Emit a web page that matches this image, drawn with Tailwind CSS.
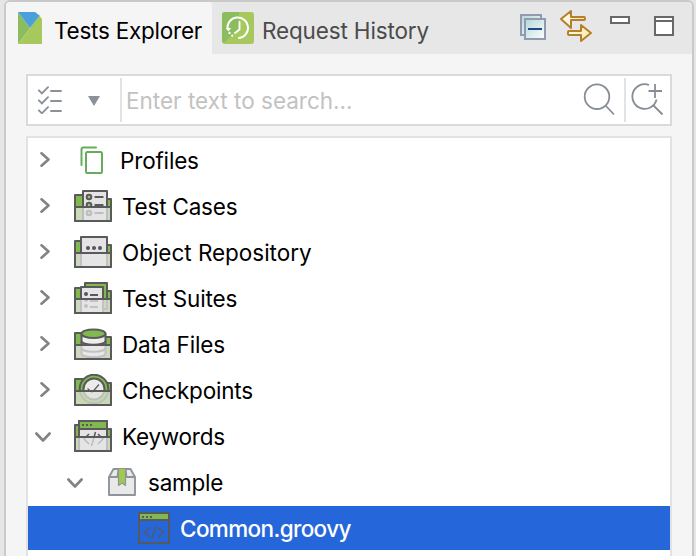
<!DOCTYPE html>
<html lang="en">
<head>
<meta charset="utf-8">
<title>Tests Explorer</title>
<script src="https://cdn.jsdelivr.net/npm/@tailwindcss/browser@4"></script>
</head>
<body class="h-[556px] w-[696px] overflow-hidden bg-[#e6e6e6] pl-1 font-['Inter','Liberation_Sans',sans-serif] text-[22.5px] leading-[28px] text-black">
<div class="flex h-[570px] w-[690px] flex-col overflow-hidden rounded-t-[6px] border-2 border-[#c9c9c9] bg-[#f5f5f5]">
  <header class="flex h-[52px] shrink-0 bg-[#e7e7e7]">
    <div class="flex w-[206px] items-start rounded-tr-[3px] bg-[#f5f5f5] pl-3 pt-[10px]">
      <svg class="h-8 w-6 shrink-0" viewBox="0 0 24 32"><path fill="#8bbd5e" d="M0 0l12 16L0 32z"/><path fill="#a6c85d" d="M0 32l12-16L21 3l3 4v25z"/><path fill="#4aa0d8" d="M0 0h17l4.500 3.500L12 16z"/></svg>
      <span class="ml-[12px] mt-[5px] whitespace-nowrap tracking-[-0.23px]">Tests Explorer</span>
    </div>
    <div class="flex grow items-start pl-[10px] pt-[10px] text-[#4b4b4b]">
      <svg class="size-8 shrink-0" viewBox="0 0 32 32" fill="none"><rect width="32" height="32" rx="3" fill="#a6c85d"/><path fill="#8bbd5e" d="M3 0h14v16L2 31Q0 30 0 28V3Q0 0 3 0z"/><path stroke="#fff" stroke-width="1.900" stroke-linecap="round" stroke-linejoin="round" d="M5.500 17A10.300 10.300 0 1 1 17 26M17.500 10v7.500L13 21"/><g fill="#fff"><path d="M4 16h5l-2.500 3.500z"/><circle cx="7.500" cy="21" r="1.200"/><circle cx="10.200" cy="23.700" r="1.100"/></g></svg>
      <span class="ml-[8px] mt-[5px] whitespace-nowrap tracking-[-0.15px]">Request History</span>
    </div>
    <div class="flex items-start pr-[18px] pt-2">
      <svg class="mt-1 size-[26px]" viewBox="0 0 26 26"><defs><linearGradient id="pane" x2="1" y2="1"><stop stop-color="#b2d7d7"/><stop offset="1" stop-color="#fff"/></linearGradient></defs><g fill="url(#pane)" stroke="#909ab0" stroke-width="2"><path d="M1 1h20v20H1z"/><path d="M5 5h20v20H5z"/></g><path fill="#1d4a86" d="M8 14h14v2H8z"/></svg>
      <svg class="ml-[14px] h-8 w-8" viewBox="0 0 32 32"><defs><linearGradient id="gold" x2="1" y2="0"><stop stop-color="#fffdf0"/><stop offset="1" stop-color="#ffe9a6"/></linearGradient></defs><g fill="url(#gold)" stroke="#b4802d" stroke-width="2" stroke-linejoin="round"><path d="M1 9l10-8v6h13q1 0 1 1v1q0 1-1 1H11v8z"/><path d="M31 23l-10 8v-6H9q-1 0-1-1v-2q0-1 1-1h12v-6z"/></g></svg>
      <svg class="ml-[18px] mt-[6px] h-2 w-5" viewBox="0 0 20 8"><path fill="#fff" stroke="#686868" stroke-width="2" d="M1 1h18v6H1z"/></svg>
      <svg class="ml-[24px] mt-[6px] size-5" viewBox="0 0 20 20"><path fill="#fff" stroke="#686868" stroke-width="2" d="M1 1h18v18H1zM1 5h18"/></svg>
    </div>
  </header>

  <main class="flex min-h-0 grow flex-col gap-[10px] pl-5 pr-5 pt-5">
    <div class="flex h-[52px] shrink-0 items-stretch border-2 border-[#dadada] bg-white py-[2px]">
      <div class="flex w-[94px] items-center border-r-2 border-[#e3e3e3] pl-[10px]">
        <svg class="h-7 w-6" viewBox="0 0 24 28" fill="none" stroke="#8b9099" stroke-width="1.900" stroke-linecap="round"><path d="M.900 4.300l3 3L10 1.200M.900 14.300l3 3L10 11.200M.900 24.300l3 3L10 21.200M13 5h10M13 15h10M13 25h10"/></svg>
        <svg class="ml-[26px] mt-[2px] h-[10px] w-3" viewBox="0 0 12 10"><path fill="#8b909c" d="M0 0h12L6 10z"/></svg>
      </div>
      <div class="flex grow items-center pl-1 text-[#c2c2c2]"><span class="mt-px whitespace-nowrap">Enter text to search...</span></div>
      <svg class="mt-1 mr-2 size-[34px]" viewBox="0 0 34 34" fill="none" stroke="#868d96" stroke-width="1.800"><circle cx="15" cy="14.700" r="12.300"/><path d="M23.500 23.500l8.500 9"/></svg>
      <div class="w-[46px] border-l-2 border-[#e3e3e3] pl-[5px] pt-1"><svg class="size-[34px]" viewBox="0 0 34 34" fill="none" stroke="#868d96" stroke-width="1.800"><path d="M18 3A12.300 12.300 0 1 0 25.600 17.500M22.500 23.500l9 9M24 2v14M17.500 9H31"/></svg></div>
    </div>

    <div id="tree" class="grow border-2 border-[#e2e2e2] bg-white"></div>
  </main>
</div>

<template id="icons">
  <svg data-icon="profiles" class="mr-[17px] h-7 w-[23px] shrink-0" viewBox="0 0 23 28" fill="none" stroke="#65ad5d" stroke-width="2"><path stroke-linecap="round" d="M1.500 19V3.500q0-2 2-2H16"/><rect x="6" y="6" width="16" height="21" rx="1.500"/></svg>
  <svg data-icon="cases" class="mr-[10px] h-8 w-[38px] shrink-0" viewBox="0 0 38 32" stroke="#5a5a5a" stroke-width="2" stroke-linejoin="round"><path fill="#82b94f" d="M1 31V5h8v4h28v22z"/><path fill="#e5e3e5" d="M9 31V1h24v30z"/><g fill="#a0bf80"><circle cx="15" cy="7" r="2.300"/><circle cx="15" cy="15" r="2.300"/><circle cx="15" cy="23" r="2.300"/></g><path d="M20.500 7h9M20.500 15h9M20.500 23h9"/><path stroke="none" fill="#e5e5e5" fill-opacity=".72" d="M1 17h36v14H1z"/><path fill="none" d="M1 17h36v14H1z"/></svg>
  <svg data-icon="objects" class="mr-[10px] h-8 w-[38px] shrink-0" viewBox="0 0 38 32" stroke="#5a5a5a" stroke-width="2" stroke-linejoin="round"><path fill="#82b94f" d="M1 31V5h6v4h30v22z"/><path fill="#e5e3e5" d="M7 31V1h26v30z"/><g stroke="none" fill="#555"><circle cx="14" cy="12" r="2"/><circle cx="20" cy="12" r="2"/><circle cx="26" cy="12" r="2"/></g><path stroke="none" fill="#e5e5e5" fill-opacity=".75" d="M1 17h36v14H1z"/><path fill="none" d="M1 17h36v14H1z"/></svg>
  <svg data-icon="suites" class="mr-[10px] h-8 w-[38px] shrink-0" viewBox="0 0 38 32" stroke="#5a5a5a" stroke-width="2" stroke-linejoin="round"><path fill="#82b94f" d="M1 31V6h7v3h29v22z"/><path fill="#82b94f" d="M11 27V1h22v26z"/><path fill="#e5e3e5" d="M7 31V5h22v26z"/><g stroke="none" fill="#555"><circle cx="12" cy="12" r="2"/><circle cx="12" cy="18" r="2"/><circle cx="12" cy="24" r="2"/></g><path d="M16 13h8M16 19h8M16 25h8"/><path stroke="none" fill="#e5e5e5" fill-opacity=".75" d="M1 17h36v14H1z"/><path fill="none" d="M1 17h36v14H1z"/></svg>
  <svg data-icon="data" class="mr-[10px] h-8 w-[38px] shrink-0" viewBox="0 0 38 32" stroke="#5a5a5a" stroke-width="2" stroke-linejoin="round"><path fill="#82b94f" d="M1 31V5h7v4h29v22z"/><path fill="#eeeeee" d="M7.500 5.500v20c0 5 24 5 24 0v-20"/><ellipse cx="19.500" cy="5.700" rx="12" ry="4.300" fill="#82b94f"/><path fill="none" d="M7.500 13c0 5 24 5 24 0M7.500 20c0 5 24 5 24 0"/><path stroke="none" fill="#e5e5e5" fill-opacity=".75" d="M1 17h36v14H1z"/><path fill="none" d="M1 17h36v14H1z"/></svg>
  <svg data-icon="checks" class="mr-[10px] h-8 w-[38px] shrink-0" viewBox="0 0 38 32" stroke="#5a5a5a" stroke-width="2" stroke-linejoin="round"><path fill="#82b94f" d="M1 31V5h8v4h28v22z"/><circle cx="20" cy="15" r="14.300" fill="#82b94f"/><circle cx="20" cy="15" r="10.500" fill="#ebebeb"/><path fill="none" stroke-width="1.200" d="M13.500 14.500l4.500 4 7-8"/><path stroke="none" fill="#dde3d6" fill-opacity=".75" d="M1 17h36v14H1z"/><path fill="none" d="M1 17h36v14H1z"/></svg>
  <svg data-icon="keywords" class="mr-[10px] h-8 w-[38px] shrink-0" viewBox="0 0 38 32" stroke="#5a5a5a" stroke-width="2" stroke-linejoin="round"><path fill="#82b94f" d="M1 31V5h5v4h31v22z"/><path fill="#e5e3e5" d="M5 31V1h28v30z"/><path fill="#82b94f" d="M5 1h28v8H5z"/><path stroke-dasharray="2 2" d="M8 5h10"/><path fill="none" stroke-width="1.500" d="M15 14l-5 5 5 5M24 14l5 5-5 5M21.500 12l-4 14"/><path stroke="none" fill="#e5e5e5" fill-opacity=".72" d="M1 17h36v14H1z"/><path fill="none" d="M1 17h36v14H1z"/></svg>
  <svg data-icon="package" class="mr-[12px] h-7 w-7 shrink-0" viewBox="0 0 28 28" stroke="#8f949c" stroke-width="1.900" stroke-linejoin="round"><path fill="#e9e9e9" d="M1 9L5.500 1h17L27 9v18H1z"/><path fill="none" d="M1 9h26M10.500 1L9.500 9M17.500 1l1 8"/><path stroke="none" fill="#a1ca4b" d="M11 1h6v16l-3-2.500L11 17z"/><path fill="none" stroke-width="1.200" d="M10.500 1v16.500l3.500-2.500 3.500 2.500V1"/></svg>
  <svg data-icon="script" class="mr-[10px] h-8 w-8 shrink-0" viewBox="0 0 32 32" fill="none" stroke="#565a60" stroke-width="2" stroke-linejoin="round"><path d="M1 1h30v30H1z"/><path fill="#82b94f" d="M1 1h30v7H1z"/><path stroke-dasharray="2 2" d="M4 5h10"/><path stroke-width="1.400" d="M12 15.500L6.500 20.500 12 25.500M20 15.500l5.500 5L20 25.500M18 14l-4 13"/></svg>
</template>

<script>
// icon, label, indent, gap after arrow, expanded (null for a leaf), letter spacing
const rows = [
  ['profiles', 'Profiles', 10, 30, false, -0.17],
  ['cases', 'Test Cases', 10, 24, false, -0.2],
  ['objects', 'Object Repository', 10, 24, false, -0.03],
  ['suites', 'Test Suites', 10, 24, false, -0.15],
  ['data', 'Data Files', 10, 24, false, -0.15],
  ['checks', 'Checkpoints', 10, 24, false, -0.2],
  ['keywords', 'Keywords', 7, 23, true, -0.25],
  ['package', 'sample', 39, 25, true, -0.25],
  ['script', 'Common.groovy', 110, 0, null, -0.62]
];
const right = '<svg class="h-4 w-3 shrink-0" viewBox="0 0 12 16" fill="none" stroke="#838383" stroke-width="2.6" stroke-linecap="round" stroke-linejoin="round"><path d="M3.500 1.300L10.500 7.500 3.500 13.700"/></svg>';
const down = '<svg class="mt-px h-[10px] w-4 shrink-0" viewBox="0 0 16 10" fill="none" stroke="#838383" stroke-width="2.6" stroke-linecap="round" stroke-linejoin="round"><path d="M1.400 1.500L8 8.500 14.600 1.500"/></svg>';
const tree = document.getElementById('tree');
const icons = document.getElementById('icons').content;
for (const [icon, label, indent, gap, open, spacing] of rows) {
  const row = document.createElement('div');
  row.className = open === null ? 'flex h-[44px] items-center bg-[#2566da] font-medium text-white' : 'mb-[2px] flex h-[44px] items-center';
  row.style.paddingLeft = indent + 'px';
  row.innerHTML = open === null ? '' : open ? down : right;
  const svg = icons.querySelector(`[data-icon="${icon}"]`).cloneNode(true);
  svg.style.marginLeft = gap + 'px';
  const text = document.createElement('span');
  text.className = 'pt-px whitespace-nowrap';
  text.style.letterSpacing = spacing + 'px';
  text.textContent = label;
  row.append(svg, text);
  tree.append(row);
}
</script>
</body>
</html>
